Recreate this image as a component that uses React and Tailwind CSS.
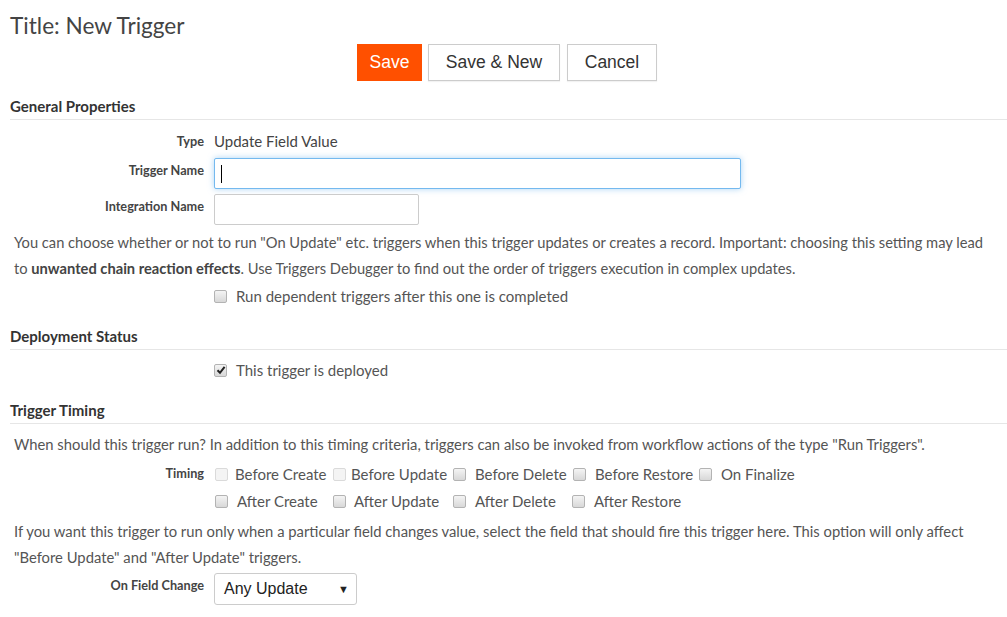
import React from "react";

function Checkbox({ checked, disabled }) {
  return (
    <span
      className={
        "inline-flex h-[13px] w-[13px] shrink-0 items-center justify-center rounded-[2px] border " +
        (disabled
          ? "border-[#dadada] bg-[#f4f4f4]"
          : "border-[#b3b3b3] bg-gradient-to-b from-[#f4f4f4] to-[#d8d8d8]")
      }
    >
      {checked && (
        <svg width="10" height="10" viewBox="0 0 10 10">
          <path d="M1.5 5.2 L4 7.8 L8.6 1.8" fill="none" stroke="#222" strokeWidth="2" />
        </svg>
      )}
    </span>
  );
}

function Label({ children, className = "" }) {
  return (
    <div className={"w-[194px] shrink-0 text-right text-[12.7px] font-bold leading-[16px] text-[#444] " + className}>
      {children}
    </div>
  );
}

function Section({ title, className = "" }) {
  return (
    <div className={"border-b border-[#e6e6e6] pb-[3px] text-[15px] font-bold leading-[20px] text-[#333] " + className}>
      {title}
    </div>
  );
}

function CheckItem({ label, checked, disabled, gap = "gap-[9px]" }) {
  return (
    <label className={"flex items-center " + gap}>
      <Checkbox checked={checked} disabled={disabled} />
      <span>{label}</span>
    </label>
  );
}

export default function App() {
  return (
    <div className="min-h-[617px] bg-white pl-[10px] font-['Lato','Liberation_Sans',sans-serif] text-[15px] text-[#555]">
      <h1 className="pt-[11px] text-[22.6px] leading-[30px] text-[#444]">Title: New Trigger</h1>

      <div className="mt-[3px] flex justify-center gap-[6px] pr-[3px] font-['Liberation_Sans',Arial,sans-serif] text-[17.5px]">
        <button className="h-[37px] w-[65px] bg-[#ff5000] text-white">Save</button>
        <button className="h-[37px] w-[132px] border border-[#cccccc] bg-white text-[#333] shadow-[0_1px_1px_rgba(0,0,0,0.05)]">
          Save &amp; New
        </button>
        <button className="ml-[1px] h-[37px] w-[90px] border border-[#cccccc] bg-white text-[#333] shadow-[0_1px_1px_rgba(0,0,0,0.05)]">
          Cancel
        </button>
      </div>

      <Section title="General Properties" className="mt-[15px]" />

      <div className="mt-[10px] flex items-center gap-[10px] leading-[22px]">
        <Label>Type</Label>
        <span className="text-[#444]">Update Field Value</span>
      </div>

      <div className="mt-[6px] flex items-start gap-[10px]">
        <Label className="pt-[4px]">Trigger Name</Label>
        <div className="flex h-[31px] w-[527px] items-center rounded-[2px] border border-[#74b9ef] bg-white shadow-[0_0_6px_rgba(102,175,233,0.55)]">
          <span className="ml-[6px] h-[18px] w-px bg-black" />
        </div>
      </div>

      <div className="mt-[5px] flex items-start gap-[10px]">
        <Label className="pt-[4px]">Integration Name</Label>
        <div className="h-[31px] w-[205px] rounded-[2px] border border-[#cccccc] bg-white" />
      </div>

      <p className="mt-[4px] w-[980px] pl-[4px] text-[14.7px] leading-[26px]">
        You can choose whether or not to run "On Update" etc. triggers when this trigger updates or creates a record. Important: choosing this setting may lead to{" "}
        <b className="text-[#444]">unwanted chain reaction effects</b>. Use Triggers Debugger to find out the order of triggers execution in complex updates.
      </p>

      <div className="mt-[4px] flex leading-[22px]">
        <div className="w-[204px]" />
        <CheckItem label="Run dependent triggers after this one is completed" />
      </div>

      <Section title="Deployment Status" className="mt-[19px]" />

      <div className="mt-[9px] flex leading-[22px]">
        <div className="w-[204px]" />
        <CheckItem label="This trigger is deployed" checked />
      </div>

      <Section title="Trigger Timing" className="mt-[19px]" />

      <p className="mt-[7px] pl-[4px] text-[14.8px] leading-[26px]">
        When should this trigger run? In addition to this timing criteria, triggers can also be invoked from workflow actions of the type "Run Triggers".
      </p>

      <div className="mt-[6px] flex items-start gap-[10px] leading-[22px]">
        <Label className="pt-[2px]">Timing</Label>
        <div className="flex flex-col gap-[5px] pl-[1px]">
          <div className="grid grid-cols-[118px_120px_120px_126px_auto]">
            <CheckItem label="Before Create" disabled gap="gap-[7px]" />
            <CheckItem label="Before Update" disabled gap="gap-[5px]" />
            <CheckItem label="Before Delete" />
            <CheckItem label="Before Restore" />
            <CheckItem label="On Finalize" />
          </div>
          <div className="grid grid-cols-[118px_120px_119px_auto]">
            <CheckItem label="After Create" />
            <CheckItem label="After Update" gap="gap-[8px]" />
            <CheckItem label="After Delete" />
            <CheckItem label="After Restore" />
          </div>
        </div>
      </div>

      <p className="mt-[6px] pl-[4px] text-[14.8px] leading-[26px]">
        If you want this trigger to run only when a particular field changes value, select the field that should fire this trigger here. This option will only affect "Before Update" and "After Update" triggers.
      </p>

      <div className="mt-[3px] flex items-start gap-[10px]">
        <Label className="pt-[4px]">On Field Change</Label>
        <div className="flex h-[32px] w-[143px] items-center justify-between rounded-[3px] border border-[#cccccc] bg-white pl-[9px] pr-[7px] font-['Liberation_Sans',Arial,sans-serif] text-[16px] text-[#222]">
          <span>Any Update</span>
          <span className="text-[11px]">▼</span>
        </div>
      </div>
    </div>
  );
}
